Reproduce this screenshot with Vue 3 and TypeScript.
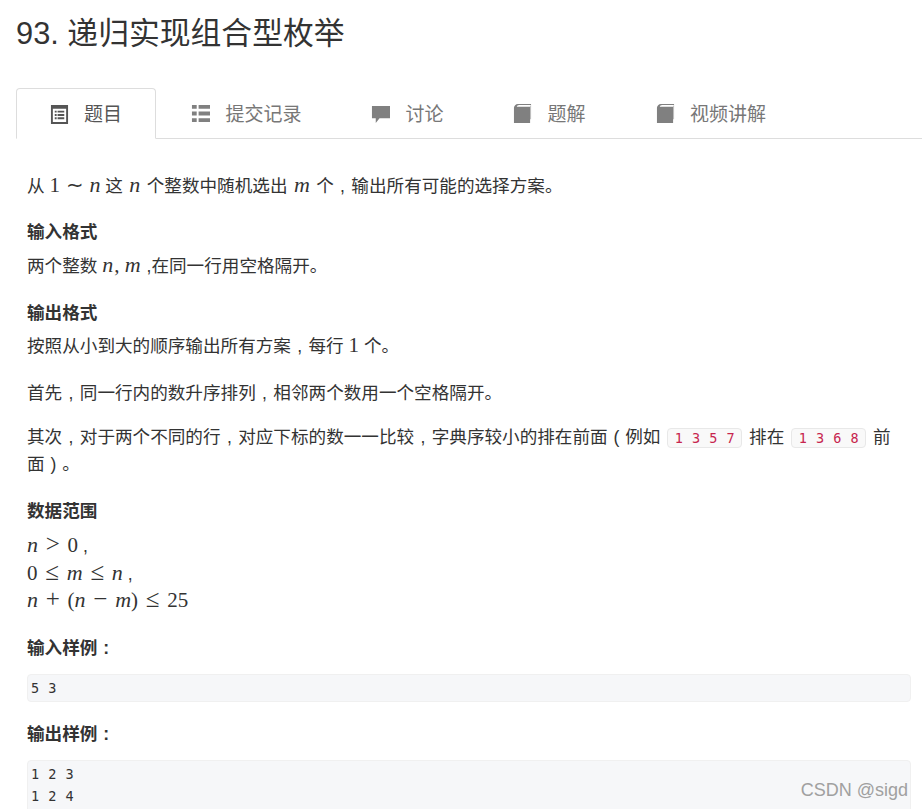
<script setup lang="ts">
const tabs = [
  { label: '题目', icon: 'list-alt', width: 140 },
  { label: '提交记录', icon: 'list', width: 181 },
  { label: '讨论', icon: 'comment', width: 141 },
  { label: '题解', icon: 'book', width: 143 },
  { label: '视频讲解', icon: 'book', width: 180 },
]
</script>

<template>
  <div class="page">
    <h1 class="title">93. 递归实现组合型枚举</h1>

    <ul class="tabs">
      <li
        v-for="(tab, i) in tabs"
        :key="i"
        class="tab"
        :class="{ active: i === 0 }"
        :style="{ width: tab.width + 'px' }"
      >
        <svg class="tab-icon" viewBox="0 0 20 20" aria-hidden="true">
          <template v-if="tab.icon === 'list-alt'">
            <path fill-rule="evenodd" d="M1 0h18v20H1zM3 4v14h14V4z" />
            <path d="M5 6h2v2H5zM8 6h7v2H8zM5 9.5h2v2H5zM8 9.5h7v2H8zM5 13h2v2H5zM8 13h7v2H8z" />
          </template>
          <template v-else-if="tab.icon === 'list'">
            <path d="M1 1h5v4H1zM8 1h12v4H8zM1 8h5v4H1zM8 8h12v4H8zM1 15h5v4H1zM8 15h12v4H8z" />
          </template>
          <template v-else-if="tab.icon === 'comment'">
            <path d="M1 2h19v13H9l-4 5v-5H1z" />
          </template>
          <template v-else>
            <path d="M5 0h14v1H6.5C5 1 4 2 4 3h14v17H1V4c0-2 2-4 4-4zM19 1v15h-.5V2z" />
          </template>
        </svg>
        <span>{{ tab.label }}</span>
      </li>
    </ul>

    <div class="content">
      <p class="first">从 <span class="m"><span class="r">1</span> <span class="tilde">∼</span> <i>n</i></span> 这 <i class="m">n</i> 个整数中随机选出 <i class="m">m</i> 个<span class="pt">,</span>输出所有可能的选择方案。</p>

      <h4>输入格式</h4>
      <p>两个整数 <span class="m spaced"><i>n</i>, <i>m</i></span> ,在同一行用空格隔开。</p>

      <h4 class="close">输出格式</h4>
      <p>按照从小到大的顺序输出所有方案<span class="pt">,</span>每行 <span class="m r">1</span> 个。</p>
      <p class="gap">首先<span class="pt">,</span>同一行内的数升序排列<span class="pt">,</span>相邻两个数用一个空格隔开。</p>
      <p class="gap tight">其次<span class="pt">,</span>对于两个不同的行<span class="pt">,</span>对应下标的数一一比较<span class="pt">,</span>字典序较小的排在前面<span class="pt">(</span>例如 <code>1 3 5 7</code> 排在 <code>1 3 6 8</code> 前面<span class="pt">)</span>。</p>

      <h4 class="range">数据范围</h4>
      <p class="math-line"><span class="m wide"><i>n</i> <span class="op">&gt;</span> <span class="r">0</span></span> ,</p>
      <p class="math-line second"><span class="m wide"><span class="r">0</span> <span class="op">≤</span> <i>m</i> <span class="op">≤</span> <i>n</i></span> ,</p>
      <p class="math-line"><span class="m wide"><i>n</i> <span class="op">+</span> (<i>n</i> <span class="op">−</span> <i>m</i>) <span class="op">≤</span> <span class="r">25</span></span></p>

      <h4 class="sample">输入样例<span class="pt">:</span></h4>
      <pre>5 3</pre>

      <h4 class="sample">输出样例<span class="pt">:</span></h4>
      <pre class="long">1 2 3
1 2 4</pre>
    </div>

    <div class="watermark">CSDN @sigd</div>
  </div>
</template>

<style>
html, body { background: #fff; overflow: hidden; }
</style>

<style scoped>
.page {
  position: relative;
  width: 922px;
  height: 809px;
  overflow: hidden;
  background: #fff;
  color: #333;
  font-family: "Liberation Sans", "Noto Sans CJK SC", sans-serif;
  font-size: 17.6px;
}
.title {
  margin: 0;
  padding: 15px 0 0 16px;
  height: 88px;
  box-sizing: border-box;
  font-size: 30.8px;
  line-height: 38px;
  font-weight: 400;
}
.tabs {
  display: flex;
  margin: 0 0 0 16px;
  padding: 0;
  height: 51px;
  box-sizing: border-box;
  list-style: none;
  border-bottom: 1px solid #ddd;
}
.tab {
  display: flex;
  align-items: center;
  justify-content: center;
  gap: 15px;
  height: 50px;
  box-sizing: border-box;
  padding-bottom: 2px;
  color: #777;
  font-size: 19px;
}
.tab-icon { width: 19px; height: 19px; fill: #808080; flex: none; margin-top: 3px; }
.tab.active {
  height: 51px;
  color: #555;
  background: #fff;
  border: 1px solid #ddd;
  border-bottom-color: #fff;
  border-radius: 4px 4px 0 0;
}
.tab.active .tab-icon { fill: #555; }
.content { padding: 34px 11px 0 27px; }
p { margin: 0; line-height: 27px; }
.first { margin-bottom: 19px; }
.gap { margin-top: 19px; }
.tight { margin-top: 17px; max-width: 870px; }
h4 {
  margin: 0 0 7px;
  font-size: 17.6px;
  line-height: 27px;
  font-weight: 700;
}
h4.close { margin-bottom: 6px; }
h4 + p { margin-bottom: 20px; }
h4.range { margin-top: 20px; margin-bottom: 8px; }
h4 + .math-line { margin-bottom: 0; }
.second { margin-top: 1px; }
/* marks sit centred in a full em slot on the source page */
.pt { display: inline-block; width: 1em; text-align: center; }
.m { font-family: "Liberation Serif", serif; font-size: 21px; line-height: 20px; }
.m i, i.m { font-size: 22px; }
i.m { margin: 0 1.5px; }
.spaced i { letter-spacing: 1px; }
.wide { word-spacing: 2.5px; }
.op { font-size: 25px; line-height: 20px; }
.tilde { font-size: 21px; margin: 0 0.5px; }
.r { font-style: normal; }
h4.sample { margin: 20px 0 12px; }
pre + h4.sample { margin-top: 19px; }
code {
  display: inline-block;
  margin: 0 2px;
  padding: 0 6.5px;
  line-height: 18px;
  font-family: "DejaVu Sans Mono", monospace;
  font-size: 13.5px;
  word-spacing: 1px;
  color: #c7254e;
  background: #f9f9f9;
  border: 1px solid #e8e8e8;
  border-radius: 4px;
}
pre {
  margin: 0 0 19px;
  padding: 2px 3px;
  font-family: "DejaVu Sans Mono", monospace;
  font-size: 13.5px;
  line-height: 22px;
  word-spacing: 1px;
  color: #333;
  background: #f6f7f9;
  border: 1px solid #f0f0f0;
  border-radius: 4px;
}
pre.long { padding-bottom: 30px; }
.watermark {
  position: absolute;
  right: 14px;
  bottom: 8px;
  color: #a0a0a0;
  font-size: 18px;
  line-height: 22px;
}
</style>
